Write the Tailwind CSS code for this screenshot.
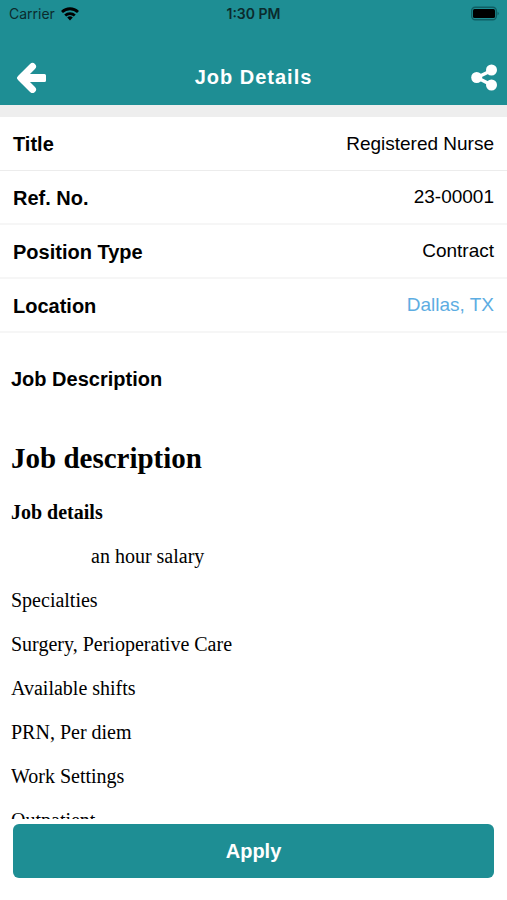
<!DOCTYPE html>
<html lang="en">
<head>
    <meta charset="UTF-8">
    <meta name="viewport" content="width=device-width, initial-scale=1.0">
    <title>Job Details</title>
    <script src="https://cdn.jsdelivr.net/npm/@tailwindcss/browser@4"></script>
</head>
<body class="bg-white text-black font-['Liberation_Sans',Arial,sans-serif]">
    <div class="h-screen flex flex-col overflow-hidden">

        <header class="bg-[#1e8e94] shrink-0">
            <!-- status bar -->
            <div class="h-7 px-2 grid grid-cols-3 items-center text-sm text-[#0b2b2d] font-[Inter,sans-serif]">
                <div class="flex items-center gap-1">
                    <span class="pl-px">Carrier</span>
                    <svg class="w-6 h-4" viewBox="1 0 24 16" fill="none" stroke="#000" stroke-width="2.800">
                        <path d="M4 6a11.500 11.500 0 0 1 16 0"/>
                        <path d="M7.200 9.500a7 7 0 0 1 9.600 0"/>
                        <path d="M12 14.500l-2.800-3a4 4 0 0 1 5.600 0z" fill="#000" stroke="none"/>
                    </svg>
                </div>
                <span class="text-center font-semibold">1:30 PM</span>
                <svg class="w-7 h-4 justify-self-end" viewBox="0 0 28 16">
                    <rect x=".7" y="1.200" width="24.600" height="12.600" rx="3.500" fill="none" stroke="#0f5f64" stroke-width="1.400"/>
                    <rect x="2" y="3" width="22" height="9" rx="1.500" fill="#000"/>
                    <path d="M26.500 5.500v4q2.500-2 0-4z" fill="#0f5f64"/>
                </svg>
            </div>
            <!-- title bar -->
            <div class="h-[77px] px-[9px] pt-5 grid grid-cols-3 items-center text-white">
                <button type="button" aria-label="Back" class="w-8 h-8 ml-[7px]">
                    <svg class="w-8 h-8" viewBox="0 -1 32 32" fill="none" stroke="#fff" stroke-linejoin="round">
                        <path d="M16.500 4.500L5 16l11.500 11.500" stroke-width="7" stroke-linecap="round"/>
                        <path d="M2 16L7 11V21z" fill="#fff" stroke-width="2"/>
                        <path d="M8 13.500H28.500V18.500H8z" fill="#fff" stroke-width="3"/>
                    </svg>
                </button>
                <h1 class="text-xl leading-6 text-center font-bold tracking-wider whitespace-nowrap">Job Details</h1>
                <button type="button" aria-label="Share" class="w-7 h-7 justify-self-end">
                    <svg class="w-7 h-7" viewBox="0 -1 28 28" fill="#fff">
                        <path d="M21.500 6.500L7 13.500l14.500 7.500" fill="none" stroke="#fff" stroke-width="3.500"/>
                        <circle cx="21.500" cy="6" r="5.500"/>
                        <circle cx="6.700" cy="13.500" r="5.500"/>
                        <circle cx="21.500" cy="21" r="5.500"/>
                    </svg>
                </button>
            </div>
        </header>

        <dl class="shrink-0 border-t-12 border-[#eeeeee] text-[19px]">
            <div class="h-[54px] px-[13px] pt-px flex items-center justify-between border-b border-[#ececec]">
                <dt class="text-xl font-bold">Title</dt>
                <dd>Registered Nurse</dd>
            </div>
            <div class="h-[54px] px-[13px] pt-px flex items-center justify-between border-b-2 border-[#f6f6f6]">
                <dt class="text-xl font-bold">Ref. No.</dt>
                <dd>23-00001</dd>
            </div>
            <div class="h-[54px] px-[13px] pt-px flex items-center justify-between border-b-2 border-[#f6f6f6]">
                <dt class="text-xl font-bold">Position Type</dt>
                <dd>Contract</dd>
            </div>
            <div class="h-[54px] px-[13px] pt-px flex items-center justify-between border-b-2 border-[#f6f6f6]">
                <dt class="text-xl font-bold">Location</dt>
                <dd><a href="#" class="text-[#5dade2]">Dallas, TX</a></dd>
            </div>
        </dl>

        <main class="flex-1 min-h-0 flex flex-col px-[11px]">
            <h2 class="mt-[34px] text-xl leading-6 font-bold">Job Description</h2>
            <div class="mt-[50px] flex-1 min-h-0 overflow-hidden flex flex-col gap-[22px] text-xl leading-[22px] font-['Liberation_Serif','Times_New_Roman',serif]">
                <h3 class="text-[29px] leading-[34px] font-bold">Job description</h3>
                <p class="mt-1 font-bold">Job details</p>
                <p class="pl-20">an hour salary</p>
                <p>Specialties</p>
                <p>Surgery, Perioperative Care</p>
                <p>Available shifts</p>
                <p>PRN, Per diem</p>
                <p>Work Settings</p>
                <p>Outpatient</p>
            </div>
        </main>

        <footer class="shrink-0 px-[13px] pt-[5px] pb-[22px]">
            <button type="button" class="w-full h-[54px] rounded-md bg-[#1e8e94] text-white text-xl font-bold">Apply</button>
        </footer>

    </div>
</body>
</html>
